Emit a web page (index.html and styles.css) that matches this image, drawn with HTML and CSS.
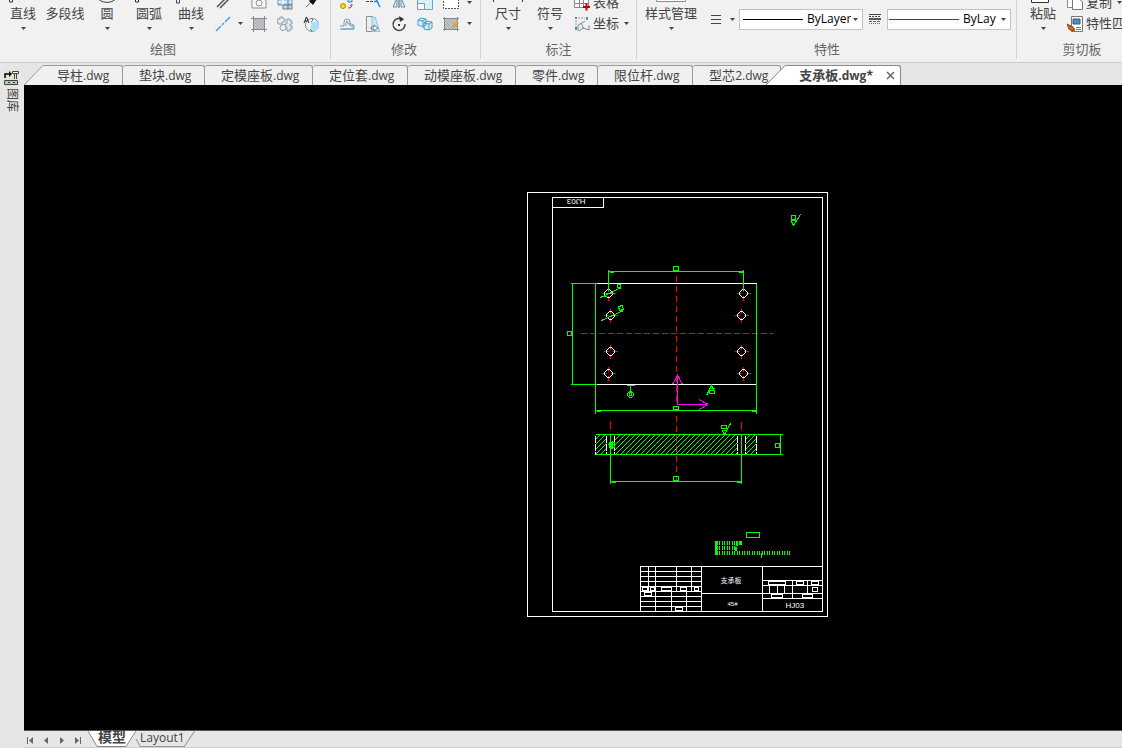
FILE: index.html
```html
<!DOCTYPE html>
<html lang="zh-CN">
<head>
<meta charset="utf-8">
<title>支承板.dwg</title>
<link rel="stylesheet" href="styles.css">
</head>
<body>
<svg class="defs" aria-hidden="true">
  <defs>
    <symbol id="caret" viewBox="0 0 7 5"><path d="M1 1h5L3.500 4z" fill="#444"/></symbol>
    <g id="hole"><path d="M-7 0h5M2 0h5M0-7v5M0 2v5" stroke="#f00"/><path d="M-1-4h2l3 3v2l-3 3h-2l-3-3v-2z" stroke="#fff"/></g>
    <clipPath id="cut"><path d="M595 434h11v20h-11zM614 434h123v20H614zM745 434h11v20h-11z"/></clipPath>
    <pattern id="grayhatch" width="3" height="3" patternUnits="userSpaceOnUse"><path d="M0 0h3v3H0z" fill="#c4c8cc"/><path d="M0 0l3 3" stroke="#a0a5aa"/></pattern>
  </defs>
</svg>

<header class="ribbon">
  <section class="group group-draw">
    <div class="tools">
      <button class="big"><svg class="big-icon" viewBox="0 0 32 32"><path d="M2.500 24v5h3v-5" fill="#fff" stroke="#333"/></svg><span>直线</span><svg class="caret"><use href="#caret"/></svg></button>
      <button class="big"><svg class="big-icon" viewBox="0 0 32 32"></svg><span>多段线</span><svg class="caret"></svg></button>
      <button class="big"><svg class="big-icon" viewBox="0 0 32 32"><circle cx="16" cy="16.500" r="13" fill="none" stroke="#444"/></svg><span>圆</span><svg class="caret"><use href="#caret"/></svg></button>
      <button class="big"><svg class="big-icon" viewBox="0 0 32 32"><path d="M2.500 25v4h3v-4" fill="#fff" stroke="#222"/></svg><span>圆弧</span><svg class="caret"><use href="#caret"/></svg></button>
      <button class="big"><svg class="big-icon" viewBox="0 0 32 32"><path d="M1.500 26v4h3v-4" fill="#fff" stroke="#345"/></svg><span>曲线</span><svg class="caret"><use href="#caret"/></svg></button>
      <div class="icons icons-draw">
        <button class="small" aria-label="双线"><svg class="icon" viewBox="0 0 16 16"><path d="M2 12L12 2M5 13L15 3" stroke="#555" stroke-width="1.500"/></svg></button>
        <span></span>
        <button class="small" aria-label="区域"><svg class="icon" viewBox="0 0 16 16"><path d="M1 0v13h14V6l-3-5" fill="#f8f8f8" stroke="#8b9094"/><circle cx="8" cy="8" r="3" fill="none" stroke="#8b9094"/></svg></button>
        <button class="small" aria-label="表"><svg class="icon" viewBox="0 0 16 16"><path d="M1 1h14v9H1z" fill="#a9d4ee" stroke="#6d8ba0"/><path d="M1 4h14M1 7h14M6 1v9M11 1v9" stroke="#fff"/><path d="M6 10h9v4H6z" fill="#c9d4dc" stroke="#687f93"/><path d="M11 5v9" stroke="#496d91"/></svg></button>
        <button class="small" aria-label="点"><svg class="icon" viewBox="0 0 16 16"><path d="M3 12l6-6" stroke="#777"/><path d="M6 6l5-5 3 3-4 6z" fill="#111"/></svg></button>
        <button class="small" aria-label="中心线"><svg class="icon" viewBox="0 0 16 16"><path d="M1 15L6 10M7 9l2-2M10 6l5-5" stroke="#35a7df" stroke-width="1.500"/></svg></button>
        <button class="small" aria-label="更多"><svg class="caret"><use href="#caret"/></svg></button>
        <button class="small" aria-label="填充"><svg class="icon" viewBox="0 0 16 16"><path d="M2 2h12v12H2z" fill="url(#grayhatch)"/><path d="M0 2.500h16M0 13.500h16M2.500 0v16M13.500 0v16" stroke="#8a8a8a"/></svg></button>
        <button class="small" aria-label="零件"><svg class="icon" viewBox="0 0 16 16"><path d="M3 1h3v2h2v3H5v2H1V6H0V3h3zM10 3h3v2h2v3h-2v2h2v3h-2v2h-3v-4H8V8h2z" fill="#e4ebf1" stroke="#8b9daf"/><circle cx="6" cy="11.500" r="3" fill="#f1f1f1" stroke="#8b9daf"/></svg></button>
        <button class="small" aria-label="局部"><svg class="icon" viewBox="0 0 16 16"><circle cx="9" cy="9" r="6.500" fill="#f4f7f8" stroke="#7b868d"/><path d="M8 6h7a6 6 0 0 1-7 9z" fill="#a9dff7"/><path d="M1 7l2.500-6L6 7M2 5h3" fill="none" stroke="#222"/><path d="M8 2l2 2-2 2M7 13l2 2" fill="none" stroke="#777"/></svg></button>
      </div>
    </div>
    <h2 class="group-name">绘图</h2>
  </section>

  <section class="group group-modify">
    <div class="tools">
      <div class="icons icons-modify">
        <button class="small" aria-label="特性"><svg class="icon" viewBox="0 0 16 16"><circle cx="4" cy="11" r="2.500" fill="#ffe100" stroke="#a88c00"/><path d="M9 4h4v3H9z" fill="#b8dff2" stroke="#4a83a8"/><path d="M9 13c3 0 4-1 4-4l-2 2" fill="none" stroke="#a44"/></svg></button>
        <button class="small" aria-label="修剪"><svg class="icon" viewBox="0 0 16 16"><path d="M1 6.500h8" stroke="#444" stroke-dasharray="3 1"/><path d="M9 6.500h3M10 2l5 10" stroke="#2d87d0" stroke-width="1.500"/></svg></button>
        <button class="small" aria-label="镜像"><svg class="icon" viewBox="0 0 16 16"><path d="M6 3v9H2zM10 3v9h4z" fill="#d4ecf7" stroke="#6f8fa3"/><path d="M8 1v12" stroke="#555"/></svg></button>
        <button class="small" aria-label="缩放"><svg class="icon" viewBox="0 0 16 16"><path d="M.500 0h15v14.500H.500z" fill="#d8f1fb" stroke="#55abd5"/><path d="M.500 8.500h7v6h-7z" fill="#fff" stroke="#55abd5"/></svg></button>
        <button class="small" aria-label="阵列"><svg class="icon" viewBox="0 0 16 16"><path d="M.500 0v13.500h15V0" fill="#fff" stroke="#555" stroke-dasharray="2 1"/></svg></button>
        <button class="small" aria-label="更多"><svg class="caret"><use href="#caret"/></svg></button>
        <button class="small" aria-label="偏移"><svg class="icon" viewBox="0 0 16 16"><path d="M1 10h4V6a3 3 0 0 1 6 0v4h3v3H2" fill="none" stroke="#8c979f"/><path d="M7 10V6q1-2 2 0v2h3q3 0 3 2v3H1" fill="none" stroke="#5aa8d3"/></svg></button>
        <button class="small" aria-label="拉伸"><svg class="icon" viewBox="0 0 16 16"><path d="M1.500.500h6v15h-6z" fill="#eee" stroke="#8a8f93"/><path d="M7 1h3l5 14.500H7z" fill="#c5e8f7" stroke="#8fc4dd"/><path d="M6 11h3v-2l4 3-4 3v-2H6z" fill="#fff" stroke="#678"/></svg></button>
        <button class="small" aria-label="旋转"><svg class="icon" viewBox="0 0 16 16"><path d="M12 4a6 6 0 1 0 2 4" fill="none" stroke="#444" stroke-width="1.500"/><path d="M8 0l5 3-4 3z" fill="#333"/><path d="M7 8h2v2H7z" fill="#333"/></svg></button>
        <button class="small" aria-label="复制实体"><svg class="icon" viewBox="0 0 16 16"><path d="M1 4l3-2 5 1v6l-3 2-5-2zM1 4l5 1v6M6 5l3-2M7 7l3-2 5 1v6l-3 2-5-1zM7 7l5 1v6M12 8l3-2" fill="#d7f0fa" stroke="#4c9bc5"/></svg></button>
        <button class="small" aria-label="编辑填充"><svg class="icon" viewBox="0 0 16 16"><path d="M2 2h12v12H2z" fill="url(#grayhatch)"/><path d="M0 2.500h16M0 13.500h16M1.500 1v14M14.500 1v14" stroke="#888"/><path d="M9 12l1-3 4-4 2 2-4 4z" fill="#e99b2f"/></svg></button>
        <button class="small" aria-label="更多"><svg class="caret"><use href="#caret"/></svg></button>
      </div>
    </div>
    <h2 class="group-name">修改</h2>
  </section>

  <section class="group group-note">
    <div class="tools">
      <button class="big"><svg class="big-icon" viewBox="0 0 32 32"><path d="M2 26.500h28M1.500 25v4M30.500 25v4" stroke="#333"/></svg><span>尺寸</span><svg class="caret"><use href="#caret"/></svg></button>
      <button class="big"><svg class="big-icon" viewBox="0 0 32 32"></svg><span>符号</span><svg class="caret"><use href="#caret"/></svg></button>
      <div class="rows">
        <button class="row"><svg class="icon" viewBox="0 0 16 16"><path d="M.500 0h14v12.500H.500z" fill="#fff"/><path d="M.500 0v12.500h14V0M.500 4.500h14M.500 8.500h14M5.500 0v12M9.500 0v12" stroke="#888" fill="none"/><path d="M9 12h7M12.500 8.500v7" stroke="#c00000" stroke-width="2"/></svg><span>表格</span></button>
        <button class="row"><svg class="icon" viewBox="0 0 16 16"><path d="M2 4v7M4 2h7" stroke="#8c9ba6" stroke-dasharray="2 1"/><path d="M4 15V9l4-2 3-2M7 7l3 6M5 15l4-3 6 2V9" fill="none" stroke="#888"/><path d="M1 1h2v2H1zM12 1h2v3h-2zM1 11h2v3H1z" fill="#3e93cc"/></svg><span>坐标</span><svg class="caret"><use href="#caret"/></svg></button>
      </div>
    </div>
    <h2 class="group-name">标注</h2>
  </section>

  <section class="group group-props">
    <div class="tools">
      <button class="big big-wide"><svg class="big-icon" viewBox="0 0 32 32"><path d="M1.500 22v6.500h29V22" fill="#fff" stroke="#6d96b0"/></svg><span>样式管理</span><svg class="caret"><use href="#caret"/></svg></button>
      <button class="pick" aria-label="线宽"><svg class="icon" viewBox="0 0 16 16"><path d="M3 4.500h10" stroke="#444"/><path d="M3 8.500h10" stroke="#444"/><path d="M3 12.500h10" stroke="#444"/></svg><svg class="caret"><use href="#caret"/></svg></button>
      <label class="combo combo-weight" aria-label="线宽样式"><svg class="sample" viewBox="0 0 60 3" preserveAspectRatio="none"><path d="M0 1.500h60" stroke="#000"/></svg><select><option>ByLayer</option></select><svg class="caret"><use href="#caret"/></svg></label>
      <span class="type-icon"><svg class="icon" viewBox="0 0 16 16"><path d="M2 3.500h12" stroke="#444"/><path d="M2 5.500h12" stroke="#444" stroke-dasharray="2 1"/><path d="M2 8h12" stroke="#555" stroke-width="2"/><path d="M2 10.500h12" stroke="#666" stroke-dasharray="3 1"/><path d="M2 12.500h12" stroke="#666" stroke-dasharray="1 1"/></svg></span>
      <label class="combo combo-type" aria-label="线型"><svg class="sample sample-long" viewBox="0 0 70 3" preserveAspectRatio="none"><path d="M0 1.500h70" stroke="#e00000"/></svg><select><option>ByLayer</option></select><svg class="caret"><use href="#caret"/></svg></label>
    </div>
    <h2 class="group-name">特性</h2>
  </section>

  <section class="group group-clip">
    <div class="tools">
      <button class="big"><svg class="big-icon" viewBox="0 0 32 32"><path d="M4.500 24v5.500h17V24" fill="#fff" stroke="#333"/></svg><span>粘贴</span><svg class="caret"><use href="#caret"/></svg></button>
      <div class="rows">
        <button class="row"><svg class="icon" viewBox="0 0 16 16"><path d="M.500 1h9v11.500h-9z" fill="#fff" stroke="#888"/><path d="M5.500 3h6l4 4v7.500h-10z" fill="#fff" stroke="#777"/></svg><span>复制</span><svg class="caret"><use href="#caret"/></svg></button>
        <button class="row"><svg class="icon" viewBox="0 0 16 16"><path d="M4.500.500h11v15h-11z" fill="#fff" stroke="#777"/><path d="M6 3h7v5H6z" fill="#4f8cc4" stroke="#2a5680"/><path d="M9 11.500h5M9 13.500h5" stroke="#777"/><path d="M0 8l6 3 2 3-3 1-3-2z" fill="#c56b20" stroke="#8a4510"/></svg><span>特性匹配</span></button>
      </div>
    </div>
    <h2 class="group-name">剪切板</h2>
  </section>
</header>

<div class="workspace">
  <aside class="side">
    <button class="library"><svg class="library-icon" viewBox="0 0 15 16"><path d="M0 0h15v16H0z" fill="#e3e4cf"/><path d="M1 8V4h5" fill="none" stroke="#000" stroke-width="1.500"/><path d="M5 1l3 3-3 3z" fill="#000"/><path d="M8.500 1.500h6v2h-6zM10.500 4v5M12.500 4v5" fill="#fff" stroke="#444"/><path d="M.500 10.500h13v4H.500z" fill="#bcc7c4" stroke="#444"/><path d="M4 12.500h2M9 12.500h2" stroke="#333"/></svg><span class="library-name">图库</span></button>
  </aside>

  <main class="main">
    <nav class="files">
      <svg class="slant" viewBox="0 0 20 20"><path d="M0 20L19 .500H20V20z" fill="#f0f0f0"/><path d="M0 20L19 .500h1" fill="none" stroke="#999"/></svg>
      <button class="file file-first">导柱<span class="ext">.dwg</span></button>
      <button class="file">垫块<span class="ext">.dwg</span></button>
      <button class="file">定模座板<span class="ext">.dwg</span></button>
      <button class="file">定位套<span class="ext">.dwg</span></button>
      <button class="file">动模座板<span class="ext">.dwg</span></button>
      <button class="file">零件<span class="ext">.dwg</span></button>
      <button class="file">限位杆<span class="ext">.dwg</span></button>
      <button class="file">型芯<span class="ext">2.dwg</span></button>
      <svg class="slant slant-active" viewBox="0 0 20 20"><path d="M0 20L19 .500H20V20z" fill="#fff"/><path d="M0 20L19 .500h1" fill="none" stroke="#888"/></svg>
      <div class="file-active"><button class="file-title">支承板<span class="ext">.dwg*</span></button><button class="close" aria-label="关闭"><svg class="close-icon" viewBox="0 0 9 9"><path d="M1 1l7 7M8 1L1 8" stroke="#666" stroke-width="1.500"/></svg></button></div>
    </nav>

    <div class="canvas">
      <svg class="drawing" viewBox="24 85 1098 645" shape-rendering="crispEdges" fill="none">
        <g transform="translate(.5 .5)">
          <g stroke="#fff">
            <path d="M527 192H827V616H527zM552 197H822V611H552zM552 207h51v-10"/>
            <path d="M595 283h161M595 384h161"/>
            <path d="M640 611V566H822M648 566v25M655 566v45M676 566v25M691 566v25M701 566v45M762 566v45M671 591v20M686 591v20"/>
            <path d="M640 571h61M640 576h61M640 581h61M640 586h61M640 591h61M640 596h61M640 601h61M640 606h61"/>
            <path d="M642 587h5v3h-5zM650 587h4v3h-4zM661 587h10v3h-10zM680 587h6v3h-6zM694 587h4v3h-4zM644 592h7v3h-7zM675 607h7v3h-7z"/>
            <path d="M701 593h121M762 580h60M762 585h60M762 598h60M769 585v8M777 585v8M784 585v8M792 580v18M807 580v13"/>
            <path d="M768 581h17v3h-17zM796 581h7v3h-7zM811 581h7v3h-7zM812 587h5v4h-5zM771 594h11v3h-11zM802 594h10v3h-10z"/>
          </g>

          <g stroke="#f00">
            <path d="M676 275.500V480" stroke-dasharray="6 4"/>
            <path d="M580.500 333H772" stroke-dasharray="6 3"/>
            <path d="M610 420v8M610 432v3M741 421v8M741 433v2"/>
          </g>
          <use href="#hole" x="608" y="293"/><use href="#hole" x="610" y="315"/>
          <use href="#hole" x="610" y="351"/><use href="#hole" x="608" y="373"/>
          <use href="#hole" x="743" y="293"/><use href="#hole" x="741" y="315"/>
          <use href="#hole" x="741" y="351"/><use href="#hole" x="743" y="373"/>

          <g clip-path="url(#cut)">
            <path stroke="#0f0" d="M575 454l20-20m-15 20l20-20m-15 20l20-20m-15 20l20-20m-15 20l20-20m-15 20l20-20m-15 20l20-20m-15 20l20-20m-15 20l20-20m-15 20l20-20m-15 20l20-20m-15 20l20-20m-15 20l20-20m-15 20l20-20m-15 20l20-20m-15 20l20-20m-15 20l20-20m-15 20l20-20m-15 20l20-20m-15 20l20-20m-15 20l20-20m-15 20l20-20m-15 20l20-20m-15 20l20-20m-15 20l20-20m-15 20l20-20m-15 20l20-20m-15 20l20-20m-15 20l20-20m-15 20l20-20m-15 20l20-20m-15 20l20-20m-15 20l20-20m-15 20l20-20m-15 20l20-20m-15 20l20-20m-15 20l20-20"/>
          </g>
          <g stroke="#fff" stroke-dasharray="7 1"><path d="M595 435v19M606 435v19M614 435v19M737 435v19M745 435v19M756 435v19"/></g>

          <g stroke="#0f0">
            <path d="M608 271H743M608 269v21M743 269v21M609 272h4M738 272h4M673 266h5v4h-5z"/>
            <path d="M570 283h26M570 384h26M572 283v101M567 331h4v4h-4zM595 283v130M756 283v130"/>
            <path d="M595 410h161M596 411h4M751 411h4M673 406h5v3h-5z"/>
            <path d="M600 297l21-10M600 296h6M605 293h9M617 284h3v3h-3zM601 320l22-10M618 306l4-1 1 4-4 1z"/>
            <path d="M626 385h8M630 385v6M629 392h2v3h-2zM629 391h2l2 2v2l-2 2h-2l-2-2v-2z"/>
            <path d="M706 395l5-10 3 6M709 388h5M709 390h5v3h-5z"/>
            <path d="M791 215h4v4h-4zM790 220h6M791 221l2 4 7-11"/>
            <path d="M721 425h5v3h-5zM721 430h5M722 431l2 3 6-11"/>
            <path d="M595 434H782M595 454H782M780 434v20M775 443h4v4h-4zM610 434v49M741 434v49"/>
            <path d="M610 481h131M611 482h4M736 482h4M673 476h5v4h-5z"/>
            <path d="M607 444h7M611 441v7M609 442h5v5h-5zM612 440v8"/>
            <path d="M746 532h13v5h-13z"/>
            <path d="M715 540v14M716 540v14M736 540v5M737 540v5M739 540v4M740 540v4M741 540v4M735 546v4M736 546v4M761 552v5"/>
            <path d="M716.500 542.500H735M716.500 547.500H735M716.500 552.500H789" stroke-width="4" stroke-dasharray="1 1 1 2"/>
          </g>
          <g stroke="#f0f"><path d="M677 404V374M672 384l5-9 5 9M677 404h30M699 399l8 5-8 5M676 377h3M704 404h3M704 403h3"/></g>
          <g class="drawing-text">
            <text transform="translate(585 198) rotate(180)">HJ03</text>
            <text x="785" y="607">HJ03</text>
            <text class="drawing-cjk" x="720" y="582">支承板</text>
            <text class="drawing-mat" x="727" y="605">45#</text>
          </g>
        </g>
      </svg>
    </div>

    <footer class="layouts">
      <button class="step" aria-label="第一个"><svg viewBox="0 0 8 8"><path d="M1.500 1v7" stroke="#666"/><path d="M7 1v7L3 4.500z" fill="#666"/></svg></button>
      <button class="step" aria-label="上一个"><svg viewBox="0 0 8 8"><path d="M6 1v7L2 4.500z" fill="#666"/></svg></button>
      <button class="step" aria-label="下一个"><svg viewBox="0 0 8 8"><path d="M2 1v7l4-3.500z" fill="#666"/></svg></button>
      <button class="step" aria-label="最后一个"><svg viewBox="0 0 8 8"><path d="M6.500 1v7" stroke="#666"/><path d="M1 1v7l4-3.500z" fill="#666"/></svg></button>
      <button class="layout layout-model"><svg class="sheet" viewBox="0 0 48 16" preserveAspectRatio="none"><path d="M0 0l9 15.500h29L48 0" fill="#fff" stroke="#888"/></svg><span>模型</span></button>
      <button class="layout layout-paper"><svg class="sheet" viewBox="0 0 62 16" preserveAspectRatio="none"><path d="M4 8l4 7.500h43L61 0" fill="none" stroke="#999"/></svg><span>Layout1</span></button>
    </footer>
  </main>
</div>
</body>
</html>
```
FILE: styles.css
```css
* { box-sizing: border-box; }

body {
  margin: 0;
  height: 100vh;
  display: flex;
  flex-direction: column;
  overflow: hidden;
  background: #e6e6e6;
  color: #444;
  font: 13px/16px "Open Sans", "Noto Sans CJK SC", sans-serif;
}

button {
  margin: 0;
  padding: 0;
  border: 0;
  background: none;
  color: inherit;
  font: inherit;
  white-space: nowrap;
}

svg { display: block; flex: none; }
.defs { position: absolute; width: 0; height: 0; }
.icon { width: 16px; height: 16px; fill: none; }
.caret { width: 7px; height: 5px; }

/* Ribbon */
.ribbon {
  flex: none;
  display: flex;
  overflow: hidden;
  padding-bottom: 3px;
  border-bottom: 1px solid #cdcdcd;
  background: #f1f1f1;
}
.group {
  flex: none;
  border-right: 1px solid #d2d2d2;
}
.group-draw { margin-left: -4px; padding: 0 6px; }
.group-modify { padding: 0 6px 0 3px; }
.group-note { padding: 0 6px; }
.group-props { padding: 0 5px 0 6px; }
.group-clip { padding: 0 10px 0 5px; }
.group-name {
  margin: 0;
  color: #666;
  font-size: 13px;
  font-weight: normal;
  line-height: 22px;
  height: 21px;
  text-align: center;
}
.tools {
  display: flex;
  align-items: center;
  height: 38px;
  overflow: hidden;
}

.big {
  display: flex;
  flex-direction: column;
  align-items: center;
  justify-content: flex-end;
  min-width: 42px;
  height: 38px;
  padding-bottom: 7px;
}
.big-icon { width: 32px; height: 32px; }
.big .caret { margin-top: 5px; }
.big-wide { min-width: 56px; }

.icons {
  display: grid;
  grid-auto-rows: 21px;
  align-content: end;
  height: 38px;
  padding-bottom: 4px;
}
.icons-draw { grid-template-columns: 22px 12px 26px 26px 26px; }
.icons-modify { grid-template-columns: repeat(5, 26px) 10px; }
.small { display: grid; place-items: center; }

.rows {
  display: flex;
  flex-direction: column;
  justify-content: flex-end;
  height: 38px;
  padding: 0 0 4px 3px;
}
.row {
  flex: none;
  display: flex;
  align-items: center;
  height: 21px;
}
.row span { padding: 0 4px 2px 3px; }

.pick {
  display: flex;
  align-items: center;
  gap: 5px;
  padding: 0 3px 0 9px;
}
.combo {
  display: flex;
  align-items: center;
  width: 124px;
  height: 21px;
  padding: 0 3px;
  border: 1px solid #c3c3c3;
  background: #fff;
}
.combo select {
  flex: 1;
  min-width: 0;
  padding: 0;
  border: 0;
  margin: 0 1px 0 0;
  appearance: none;
  background: none;
  color: #000;
  font: 12px/16px "Open Sans", sans-serif;
}
.combo-type { padding-left: 1px; }
.combo-type select { margin-right: 4px; }
.combo .sample { width: 60px; height: 3px; margin-right: 4px; }
.combo .sample-long { width: 70px; }
.type-icon { padding: 0 4px; }

/* Work area */
.workspace { flex: 1; display: flex; min-height: 0; }
.side { flex: none; width: 24px; }
.library {
  display: flex;
  flex-direction: column;
  align-items: center;
  width: 23px;
  padding-top: 7px;
}
.library-icon { width: 15px; height: 16px; }
.library-name {
  margin-top: 2px;
  writing-mode: vertical-rl;
  text-orientation: sideways;
  font-size: 12px;
  line-height: 16px;
}
.main { flex: 1; display: flex; flex-direction: column; min-width: 0; }

.files {
  flex: none;
  display: flex;
  align-items: flex-end;
  height: 22px;
}
.slant { width: 20px; height: 20px; }
.slant-active { z-index: 1; margin-left: -15px; }
.file {
  height: 20px;
  padding: 0 12px 0 16px;
  border: solid #999;
  border-width: 1px 1px 0 0;
  border-radius: 3px 3px 0 0;
  background: #f0f0f0;
  line-height: 18px;
}
.file-first { padding-left: 13px; border-top-left-radius: 0; }
.ext { display: inline-block; min-width: 27px; font-size: 12px; text-align: left; }
.file-active {
  display: flex;
  align-items: center;
  gap: 13px;
  height: 20px;
  padding: 0 5px 0 13px;
  border: solid #888;
  border-width: 1px 1px 0 0;
  border-top-right-radius: 3px;
  background: #fff;
}
.file-title { font-weight: bold; line-height: 18px; }
.close-icon { width: 9px; height: 9px; }

.canvas { flex: 1; min-height: 0; background: #000; }
.drawing { width: 100%; height: 100%; }
.drawing-text { fill: #fff; font: 8px "Liberation Sans Narrow", "Liberation Sans", sans-serif; }
.drawing-cjk { font: 7px "Noto Sans CJK SC", sans-serif; }
.drawing-mat { font-size: 6px; }

/* Layout tabs */
.layouts {
  flex: none;
  display: flex;
  align-items: flex-start;
  height: 18px;
  border-top: 1px solid #555;
  border-bottom: 1px solid #cfcfcf;
}
.step { width: 16px; height: 17px; padding: 4px 6px 4px 2px; }
.step svg { width: 8px; height: 8px; }
.layout { position: relative; height: 16px; padding-bottom: 4px; line-height: 12px; }
.layout span { position: relative; }
.layout-model { z-index: 1; width: 48px; font-size: 14px; font-weight: bold; }
.layout-paper { margin-left: -4px; padding: 0 11px 3px 8px; font-size: 12px; }
.sheet { position: absolute; inset: 0; width: 100%; height: 16px; }
```
